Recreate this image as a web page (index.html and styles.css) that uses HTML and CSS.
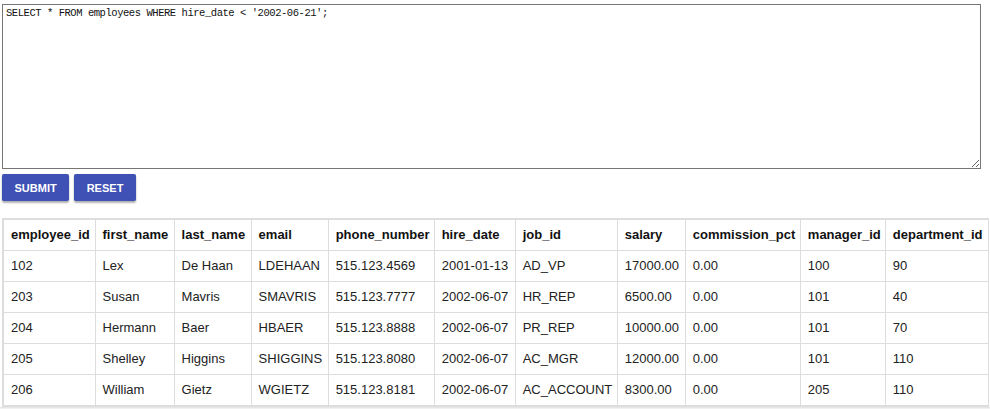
FILE: index.html
```html
<!DOCTYPE html>
<html>
<head>
<meta charset="utf-8">
<link rel="stylesheet" href="styles.css">
</head>
<body>
<main class="page">
  <textarea class="query" spellcheck="false">SELECT * FROM employees WHERE hire_date &lt; '2002-06-21';</textarea>
  <div class="actions">
    <button class="btn">SUBMIT</button>
    <button class="btn">RESET</button>
  </div>
  <div class="results">
    <table class="grid">
      <colgroup>
        <col class="c1"><col class="c2"><col class="c3"><col class="c4"><col class="c5"><col class="c6"><col class="c7"><col class="c8"><col class="c9"><col class="c10"><col class="c11">
      </colgroup>
      <thead>
        <tr><th>employee_id</th><th>first_name</th><th>last_name</th><th>email</th><th>phone_number</th><th>hire_date</th><th>job_id</th><th>salary</th><th>commission_pct</th><th>manager_id</th><th>department_id</th></tr>
      </thead>
      <tbody>
        <tr><td>102</td><td>Lex</td><td>De Haan</td><td>LDEHAAN</td><td>515.123.4569</td><td>2001-01-13</td><td>AD_VP</td><td>17000.00</td><td>0.00</td><td>100</td><td>90</td></tr>
        <tr><td>203</td><td>Susan</td><td>Mavris</td><td>SMAVRIS</td><td>515.123.7777</td><td>2002-06-07</td><td>HR_REP</td><td>6500.00</td><td>0.00</td><td>101</td><td>40</td></tr>
        <tr><td>204</td><td>Hermann</td><td>Baer</td><td>HBAER</td><td>515.123.8888</td><td>2002-06-07</td><td>PR_REP</td><td>10000.00</td><td>0.00</td><td>101</td><td>70</td></tr>
        <tr><td>205</td><td>Shelley</td><td>Higgins</td><td>SHIGGINS</td><td>515.123.8080</td><td>2002-06-07</td><td>AC_MGR</td><td>12000.00</td><td>0.00</td><td>101</td><td>110</td></tr>
        <tr><td>206</td><td>William</td><td>Gietz</td><td>WGIETZ</td><td>515.123.8181</td><td>2002-06-07</td><td>AC_ACCOUNT</td><td>8300.00</td><td>0.00</td><td>205</td><td>110</td></tr>
      </tbody>
    </table>
    <div class="scrolltrack"></div>
  </div>
</main>
</body>
</html>
```

FILE: styles.css
```css
html, body {
  margin: 0;
  padding: 0;
  background: #ffffff;
}

.page {
  padding: 4px 0 0 2px;
  font-family: "Liberation Sans", Arial, sans-serif;
}

.query {
  display: block;
  box-sizing: border-box;
  width: 979px;
  height: 165px;
  margin: 0;
  padding: 2px 3px;
  border: 1px solid #767676;
  border-radius: 0;
  font-family: "Liberation Mono", monospace;
  font-size: 10.5px;
  letter-spacing: -0.45px;
  line-height: 13px;
  color: #111;
  background: #fff;
  resize: vertical;
}

.actions {
  display: flex;
  gap: 5px;
  margin-top: 5px;
}

.btn {
  height: 27px;
  padding: 0 12.5px;
  border: none;
  border-radius: 2px;
  background: #3f51b5;
  color: #ffffff;
  font-family: "Liberation Sans", Arial, sans-serif;
  font-weight: bold;
  font-size: 11px;
  letter-spacing: 0;
  box-shadow: 0 2px 2px rgba(0, 0, 0, 0.3), 0 0 1px rgba(0, 0, 0, 0.2);
  cursor: pointer;
}

.results {
  margin-top: 17px;
  margin-left: -2px;
}

.grid {
  margin-left: 2px;
  border-collapse: collapse;
  table-layout: fixed;
  width: 987px;
  border: 2px solid #dddddd;
  border-right-width: 1px;
  font-size: 13px;
  color: #222222;
}

.grid th,
.grid td {
  border: 1px solid #dddddd;
  padding: 7px 7px 7px 7px;
  line-height: 16px;
  text-align: left;
  white-space: nowrap;
  overflow: hidden;
}

.grid th {
  font-weight: bold;
  color: #111111;
}

.c1 { width: 92px; }
.c2 { width: 79px; }
.c3 { width: 77px; }
.c4 { width: 77px; }
.c5 { width: 106px; }
.c6 { width: 81px; }
.c7 { width: 102px; }
.c8 { width: 68px; }
.c9 { width: 115px; }
.c10 { width: 85px; }
.c11 { width: 103px; }

.scrolltrack {
  height: 15px;
  background: #f1f1f1;
  border-top: 1px solid #e6e6e6;
}
```
